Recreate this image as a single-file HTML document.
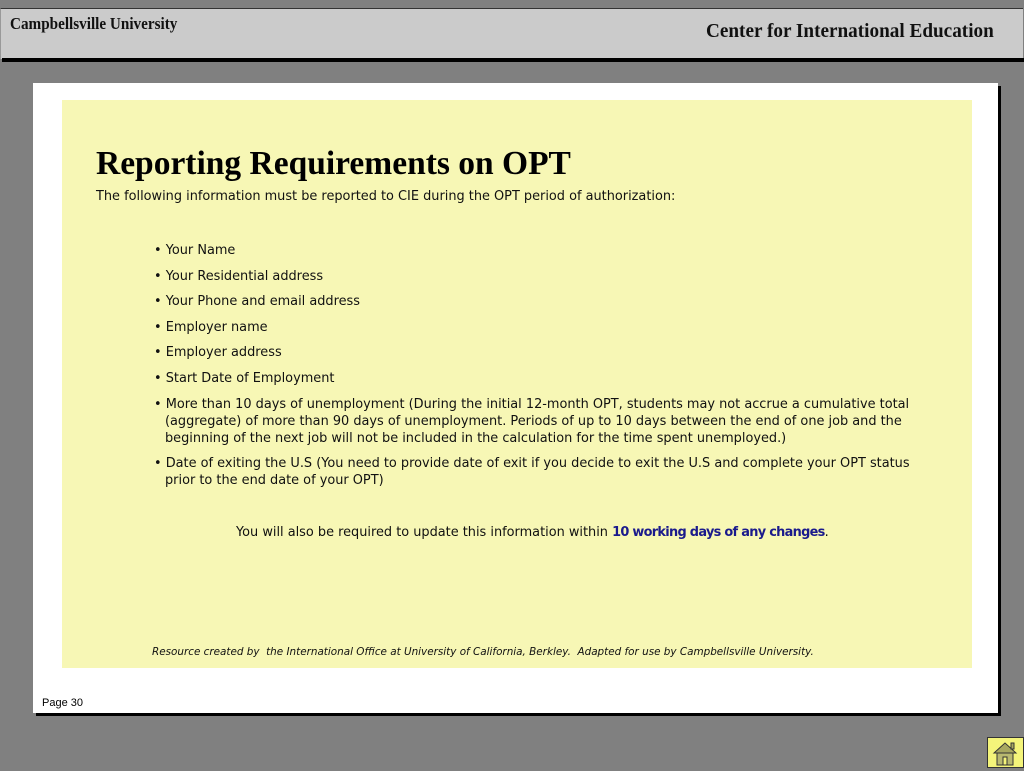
<!DOCTYPE html>
<html><head><meta charset="utf-8"><style>
*{margin:0;padding:0}
body{width:1024px;height:768px;background:#808080;position:relative;overflow:hidden;font-family:"DejaVu Sans","Liberation Sans",sans-serif}
.hdr{position:absolute;left:0;top:8px;width:1022px;height:50px;background:#cbcbcb;border-top:1px solid #333;border-left:1px solid #999}
.hdrsh{position:absolute;left:2px;top:58px;width:1022px;height:4px;background:#000}
.t1{position:absolute;left:10px;top:14px;font:bold 16.5px "Liberation Serif",serif;color:#111;transform:scaleX(0.92);transform-origin:left}
.t2{position:absolute;right:30px;top:20px;font:bold 20px "Liberation Serif",serif;color:#111;transform:scaleX(0.96);transform-origin:right}
.panel{position:absolute;left:33px;top:83px;width:965px;height:630px;background:#fff;box-shadow:3px 3px 0 #000}
.yel{position:absolute;left:62px;top:100px;width:910px;height:568px;background:#f7f7b5}
.h1{position:absolute;left:96px;top:145px;font:bold 33.5px "Liberation Serif",serif;color:#000}
.p{position:absolute;font-size:12.9px;color:#111;line-height:17px}
ul{position:absolute;left:154px;top:242px;width:770px;list-style:none;font-size:12.9px;line-height:17px;color:#111}
li{padding-left:11px;text-indent:-11px;margin-bottom:8.6px}
.note{position:absolute;left:152px;top:646px;font-size:10.4px;font-style:italic;color:#111}
.pg{position:absolute;left:42px;top:697px;font:11px "Liberation Sans",sans-serif;color:#000}
.home{position:absolute;left:987px;top:737px;width:37px;height:31px;background:#f4f47a;border:1px solid #333;box-sizing:border-box}
</style></head><body>
<div class="hdr"></div><div class="hdrsh"></div>
<div class="t1">Campbellsville University</div>
<div class="t2">Center for International Education</div>
<div class="panel"></div>
<div class="yel"></div>
<div class="h1">Reporting Requirements on OPT</div>
<div class="p" style="left:96px;top:188px">The following information must be reported to CIE during the OPT period of authorization:</div>
<ul>
<li>• Your Name</li>
<li>• Your Residential address</li>
<li>• Your Phone and email address</li>
<li>• Employer name</li>
<li>• Employer address</li>
<li>• Start Date of Employment</li>
<li>• More than 10 days of unemployment (During the initial 12-month OPT, students may not accrue a cumulative total (aggregate) of more than 90 days of unemployment. Periods of up to 10 days between the end of one job and the beginning of the next job will not be included in the calculation for the time spent unemployed.)</li>
<li>• Date of exiting the U.S (You need to provide date of exit if you decide to exit the U.S and complete your OPT status prior to the end date of your OPT)</li>
</ul>
<div class="p" style="left:236px;top:524px">You will also be required to update this information within <b style="color:#1a1a8c;letter-spacing:-0.7px">10 working days of any changes</b>.</div>
<div class="note">Resource created by&nbsp; the International Office at University of California, Berkley.&nbsp; Adapted for use by Campbellsville University.</div>
<div class="pg">Page 30</div>
<div class="home"><svg width="35" height="29" viewBox="0 0 35 29"><path d="M6 15 L17 5 L28 15 Z" fill="#a8a860" stroke="#333"/><rect x="23" y="5" width="3" height="6" fill="#a8a860" stroke="#333"/><rect x="9" y="15" width="16" height="12" fill="#b8b870" stroke="#333"/><rect x="15" y="19" width="4" height="8" fill="#f4f47a" stroke="#333"/></svg></div>
</body></html>
